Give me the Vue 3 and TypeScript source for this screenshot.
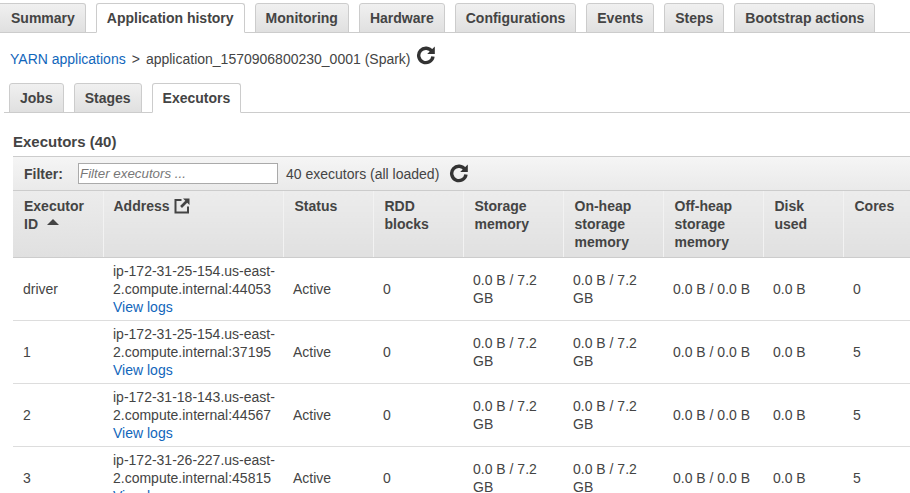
<template>
  <div class="page">
    <div class="tabs top-tabs">
      <div
        v-for="tab in topTabs"
        :key="tab"
        class="tab"
        :class="{ active: tab === 'Application history' }"
      >
        {{ tab }}
      </div>
    </div>

    <div class="crumbs">
      <a class="link">YARN applications</a>
      <span class="sep">&gt;</span>
      <span>application_1570906800230_0001 (Spark)</span>
      <svg class="refresh crumb-refresh" viewBox="0 0 20 20" width="20" height="20">
        <path d="M16 6.600A7.2 7.2 0 1 0 17 11.500" fill="none" stroke="#333" stroke-width="3.400" />
        <path d="M18.800 1.500V9H11.200Z" fill="#333" />
      </svg>
    </div>

    <div class="tabs sub-tabs">
      <div v-for="tab in subTabs" :key="tab" class="tab" :class="{ active: tab === 'Executors' }">
        {{ tab }}
      </div>
    </div>

    <section class="panel">
      <h2 class="title">Executors (40)</h2>
      <div class="filter-bar">
        <label class="filter-label">Filter:</label>
        <input class="filter-input" type="text" placeholder="Filter executors ..." />
        <span class="filter-count">40 executors (all loaded)</span>
        <svg class="refresh bar-refresh" viewBox="0 0 20 20" width="20" height="20">
          <path d="M16 6.600A7.2 7.2 0 1 0 17 11.500" fill="none" stroke="#333" stroke-width="3.400" />
          <path d="M18.800 1.500V9H11.200Z" fill="#333" />
        </svg>
      </div>

      <table class="grid">
        <colgroup>
          <col v-for="w in colWidths" :key="w.id" :style="{ width: w.px + 'px' }" />
        </colgroup>
        <thead>
          <tr>
            <th>
              Executor<br />ID
              <span class="sort-up"></span>
            </th>
            <th class="address-head">
              Address
              <svg class="ext" viewBox="0 0 16 16" width="16" height="16">
                <path d="M7.500 2H1.500V14.500H14V8.500" fill="none" stroke="#444" stroke-width="2" />
                <path d="M9 0.500H15.500V7L13.200 4.700L8 9.900L6.100 8L11.300 2.800Z" fill="#444" />
              </svg>
            </th>
            <th>Status</th>
            <th>RDD<br />blocks</th>
            <th>Storage<br />memory</th>
            <th>On-heap<br />storage<br />memory</th>
            <th>Off-heap<br />storage<br />memory</th>
            <th>Disk<br />used</th>
            <th>Cores</th>
          </tr>
        </thead>
        <tbody>
          <tr v-for="row in rows" :key="row.id">
            <td>{{ row.id }}</td>
            <td class="address">
              {{ row.host }}<br />{{ row.tail }}<br />
              <a class="link">View logs</a>
            </td>
            <td>Active</td>
            <td>0</td>
            <td>0.0 B / 7.2<br />GB</td>
            <td>0.0 B / 7.2<br />GB</td>
            <td>0.0 B / 0.0 B</td>
            <td>0.0 B</td>
            <td>{{ row.cores }}</td>
          </tr>
        </tbody>
      </table>
    </section>
  </div>
</template>

<script setup lang="ts">
const topTabs = [
  'Summary',
  'Application history',
  'Monitoring',
  'Hardware',
  'Configurations',
  'Events',
  'Steps',
  'Bootstrap actions',
];

const subTabs = ['Jobs', 'Stages', 'Executors'];

const colWidths = [90, 180, 90, 90, 100, 100, 100, 80, 67].map((px, id) => ({ id, px }));

const rows = [
  { id: 'driver', host: 'ip-172-31-25-154.us-east-', tail: '2.compute.internal:44053', cores: 0 },
  { id: '1', host: 'ip-172-31-25-154.us-east-', tail: '2.compute.internal:37195', cores: 5 },
  { id: '2', host: 'ip-172-31-18-143.us-east-', tail: '2.compute.internal:44567', cores: 5 },
  { id: '3', host: 'ip-172-31-26-227.us-east-', tail: '2.compute.internal:45815', cores: 5 },
];
</script>

<style>
html,
body {
  margin: 0;
  height: 100%;
  overflow: hidden;
  background: #fff;
}
</style>

<style scoped>
.page {
  width: 910px;
  height: 493px;
  overflow: hidden;
  font-family: 'Liberation Sans', Arial, sans-serif;
  font-size: 14px;
  line-height: 18px;
  color: #444;
}

.tabs {
  display: flex;
  align-items: flex-end;
  box-sizing: border-box;
  border-bottom: 1px solid #ccc;
}

.top-tabs {
  height: 33px;
  padding-top: 3px;
  gap: 10px;
}

.sub-tabs {
  height: 30px;
  margin-left: 4px;
  padding-left: 5px;
  gap: 10px;
}

.tab {
  box-sizing: border-box;
  height: 30px;
  margin-bottom: -1px;
  padding: 5px 10px 0;
  font-weight: 700;
  white-space: nowrap;
  color: #444;
  background: linear-gradient(#f0f0f0, #e0e0e0);
  border: 1px solid #ccc;
  border-radius: 3px 3px 0 0;
}

.top-tabs .tab:first-child {
  padding-left: 11px;
  border-left: 0;
  border-top-left-radius: 0;
}

.tab.active {
  background: #fff;
  border-bottom-color: #fff;
}

.crumbs {
  display: flex;
  align-items: center;
  height: 50px;
  padding: 2px 0 0 10px;
  box-sizing: border-box;
  color: #444;
}

.sep {
  margin: 0 6px;
}

.crumb-refresh {
  margin: -9px 0 0 5px;
}

.bar-refresh {
  margin-top: -2px;
}

.link {
  color: #1166bb;
}

.panel {
  margin-left: 13px;
}

.title {
  margin: 20px 0 5px;
  font-size: 15px;
  line-height: 18px;
  font-weight: 700;
}

.filter-bar {
  display: flex;
  align-items: center;
  box-sizing: border-box;
  height: 35px;
  padding-left: 11px;
  background: linear-gradient(#f5f5f5, #eaeaea);
  border-top: 1px solid #ccc;
  border-bottom: 1px solid #ccc;
}

.filter-label {
  width: 54px;
  font-weight: 700;
}

.filter-input {
  box-sizing: border-box;
  width: 200px;
  height: 21px;
  padding: 0 1px;
  font-family: inherit;
  font-size: 13.33px;
  border: 1px solid #aaa;
  background: #fff;
  outline: 0;
}

.filter-input::placeholder {
  font-style: italic;
  color: #777;
}

.filter-count {
  margin: 0 10px 0 8px;
}

.grid {
  width: 897px;
  border-collapse: collapse;
  table-layout: fixed;
}

.grid th {
  box-sizing: border-box;
  height: 66px;
  padding: 6px 10px 0 11px;
  text-align: left;
  vertical-align: top;
  font-weight: 700;
  background: linear-gradient(#ececec, #e0e0e0);
  border-bottom: 1px solid #ccc;
  border-left: 1px solid #f2f2f2;
}

.grid th:first-child {
  border-left: 0;
}

.grid th.address-head {
  padding-left: 10px;
}

.grid td {
  box-sizing: border-box;
  height: 63px;
  padding: 0 10px;
  border-bottom: 1px solid #ddd;
}

.grid td.address {
  white-space: nowrap;
}

.sort-up {
  display: inline-block;
  width: 0;
  height: 0;
  margin: 0 0 4px 5px;
  border-left: 6px solid transparent;
  border-right: 6px solid transparent;
  border-bottom: 6px solid #444;
}

.ext {
  vertical-align: -3px;
  margin-left: 1px;
}

.refresh {
  display: block;
  flex: none;
}
</style>
